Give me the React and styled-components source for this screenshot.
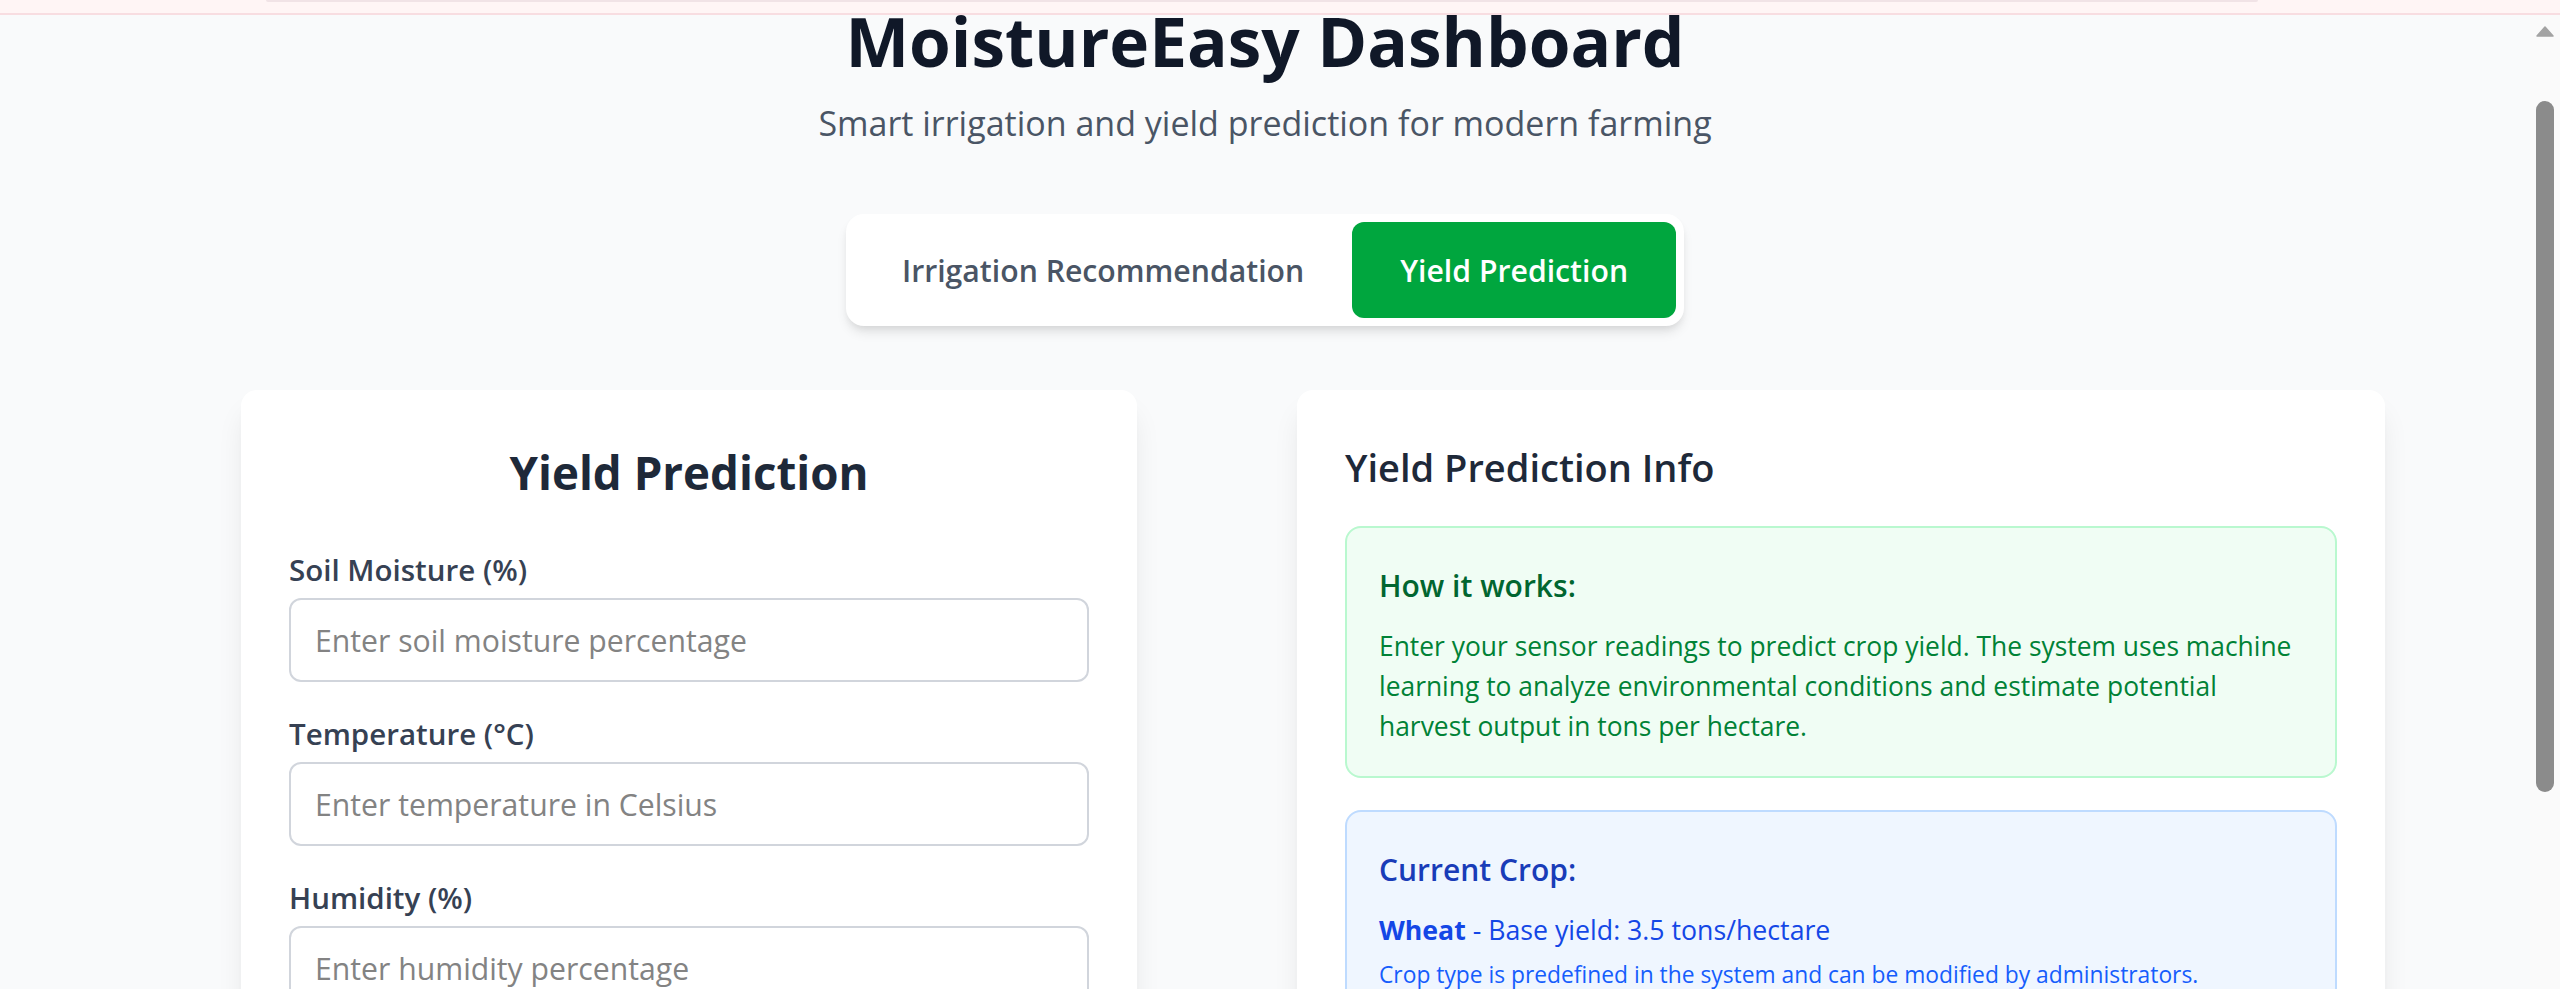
import React, { useLayoutEffect, useRef } from "react";
import styled, { createGlobalStyle } from "styled-components";

const GlobalStyle = createGlobalStyle`
  html, body { margin: 0; padding: 0; height: 100%; overflow: hidden; }
  body {
    font-family: "Open Sans", "Noto Sans", sans-serif;
    background: #f9fafb;
    color: #101828;
  }
  #root { height: 100%; }
  *, *::before, *::after { box-sizing: border-box; }
`;

const Frame = styled.div`
  height: 100vh;
  display: flex;
  flex-direction: column;
  background: #f9fafb;
`;

const Banner = styled.div`
  flex: none;
  height: 15px;
  padding-right: 36px;
  background: #fff5f5;
  border-bottom: 2px solid #f8dde1;
  display: flex;
  justify-content: center;
`;

const BannerEdge = styled.div`
  width: 1992px;
  height: 2px;
  background: #f1e3e6;
  border-radius: 0 0 3px 3px;
`;

const Body = styled.div`
  flex: 1;
  min-height: 0;
  display: flex;
`;

const Viewport = styled.div`
  flex: 1;
  min-width: 0;
  overflow: hidden;
`;

const ScrollTrack = styled.div`
  flex: none;
  width: 30px;
  background: #fafafa;
  display: flex;
  flex-direction: column;
  align-items: center;
`;

const ScrollArrow = styled.svg`
  margin-top: 10px;
  width: 18px;
  height: 13px;
  display: block;
`;

const ScrollThumb = styled.div`
  margin-top: 63px;
  width: 18px;
  height: 691px;
  border-radius: 9px;
  background: #8b8b8b;
`;

const Page = styled.main`
  padding: 64px 0 96px;
`;

const Container = styled.div`
  max-width: 2304px;
  margin: 0 auto;
  padding: 0 32px;
`;

const Header = styled.header`
  text-align: center;
  margin-bottom: 63px;
`;

const Title = styled.h1`
  margin: 0 0 14px;
  padding-top: 3px;
  font-size: 67.5px;
  line-height: 80px;
  font-weight: 700;
  color: #101828;
`;

const Subtitle = styled.p`
  margin: 0;
  font-size: 34px;
  line-height: 56px;
  color: #4a5565;
`;

const TabsRow = styled.div`
  display: flex;
  justify-content: center;
  margin-bottom: 64px;
`;

const TabBar = styled.div`
  display: flex;
  padding: 8px;
  background: #ffffff;
  border-radius: 18px;
  box-shadow: 0 8px 12px -2px rgba(0, 0, 0, 0.1), 0 4px 8px -4px rgba(0, 0, 0, 0.1);
`;

const Tab = styled.button`
  height: 96px;
  padding: 0 48px;
  border: none;
  border-radius: 12px;
  font-family: inherit;
  font-size: 30.2px;
  font-weight: 600;
  cursor: pointer;
  background: ${(p) => (p.$active ? "#00a63e" : "transparent")};
  color: ${(p) => (p.$active ? "#ffffff" : "#4a5565")};
`;

const Grid = styled.div`
  display: grid;
  grid-template-columns: repeat(2, minmax(0, 1fr));
  gap: 64px;
  align-items: start;
`;

const Card = styled.section`
  background: #ffffff;
  border-radius: 16px;
  padding: 48px;
  box-shadow: 0 20px 30px -6px rgba(0, 0, 0, 0.1), 0 8px 12px -8px rgba(0, 0, 0, 0.1);
  width: 100%;
  max-width: ${(p) => (p.$narrow ? "896px" : "none")};
  margin: 0 auto;
`;

const CardTitle = styled.h2`
  margin: 0 0 46px;
  padding-top: 2px;
  text-align: center;
  font-size: 45.7px;
  line-height: 64px;
  font-weight: 700;
  color: #1e2939;
`;

const Form = styled.form`
  display: flex;
  flex-direction: column;
  gap: 32px;
`;

const Field = styled.div`
  display: flex;
  flex-direction: column;
`;

const Label = styled.label`
  margin-bottom: 8px;
  font-size: 29.5px;
  line-height: 40px;
  font-weight: 600;
  color: #364153;
`;

const Input = styled.input`
  width: 100%;
  height: 84px;
  padding: 0 24px;
  border: 2px solid #d1d5dc;
  border-radius: 12px;
  background: #ffffff;
  font-family: inherit;
  font-size: 30.2px;
  color: #101828;
  outline: none;
  &::placeholder { color: #838383; opacity: 1; }
`;

const Submit = styled.button`
  height: 96px;
  border: none;
  border-radius: 12px;
  background: #00a63e;
  color: #ffffff;
  font-family: inherit;
  font-size: 30px;
  font-weight: 600;
`;

const InfoTitle = styled.h2`
  margin: 0 0 31px;
  padding-top: 1px;
  font-size: 38px;
  line-height: 56px;
  font-weight: 600;
  color: #1e2939;
`;

const tones = {
  green: { bg: "#f0fdf4", border: "#b9f8cf", head: "#016630", text: "#008236" },
  blue: { bg: "#eff6ff", border: "#bedbff", head: "#193cb8", text: "#1447e6", note: "#155dfc" },
};

const Notice = styled.div`
  padding: 34px 32px 30px;
  border-radius: 16px;
  border: 2px solid ${(p) => tones[p.$tone].border};
  background: ${(p) => tones[p.$tone].bg};
  & + & { margin-top: 32px; }
`;

const NoticeTitle = styled.h3`
  margin: 0 0 16px;
  font-size: 30px;
  line-height: 48px;
  font-weight: 600;
  color: ${(p) => tones[p.$tone].head};
`;

const NoticeText = styled.p`
  margin: 0;
  font-size: ${(p) => (p.$tone === "blue" ? "26.7px" : "26.4px")};
  line-height: 40px;
  color: ${(p) => tones[p.$tone].text};
`;

const Strong = styled.strong`
  font-weight: 700;
`;

const NoticeNote = styled.p`
  margin: 9px 0 0;
  font-size: 22.8px;
  line-height: 32px;
  color: ${(p) => tones[p.$tone].note};
`;

export default function App() {
  const viewRef = useRef(null);
  useLayoutEffect(() => {
    if (viewRef.current) viewRef.current.scrollTop = 81;
  }, []);

  return (
    <>
      <GlobalStyle />
      <Frame>
        <Banner>
          <BannerEdge />
        </Banner>
        <Body>
          <Viewport ref={viewRef}>
            <Page>
              <Container>
                <Header>
                  <Title>MoistureEasy Dashboard</Title>
                  <Subtitle>Smart irrigation and yield prediction for modern farming</Subtitle>
                </Header>
                <TabsRow>
                  <TabBar>
                    <Tab type="button">Irrigation Recommendation</Tab>
                    <Tab type="button" $active>Yield Prediction</Tab>
                  </TabBar>
                </TabsRow>
                <Grid>
                  <Card $narrow>
                    <CardTitle>Yield Prediction</CardTitle>
                    <Form onSubmit={(e) => e.preventDefault()}>
                      <Field>
                        <Label htmlFor="soil">Soil Moisture (%)</Label>
                        <Input id="soil" type="number" placeholder="Enter soil moisture percentage" />
                      </Field>
                      <Field>
                        <Label htmlFor="temp">Temperature (°C)</Label>
                        <Input id="temp" type="number" placeholder="Enter temperature in Celsius" />
                      </Field>
                      <Field>
                        <Label htmlFor="hum">Humidity (%)</Label>
                        <Input id="hum" type="number" placeholder="Enter humidity percentage" />
                      </Field>
                      <Submit type="submit">Predict Yield</Submit>
                    </Form>
                  </Card>
                  <Card>
                    <InfoTitle>Yield Prediction Info</InfoTitle>
                    <Notice $tone="green">
                      <NoticeTitle $tone="green">How it works:</NoticeTitle>
                      <NoticeText $tone="green">
                        Enter your sensor readings to predict crop yield. The system uses machine
                        learning to analyze environmental conditions and estimate potential harvest
                        output in tons per hectare.
                      </NoticeText>
                    </Notice>
                    <Notice $tone="blue">
                      <NoticeTitle $tone="blue">Current Crop:</NoticeTitle>
                      <NoticeText $tone="blue">
                        <Strong>Wheat</Strong> - Base yield: 3.5 tons/hectare
                      </NoticeText>
                      <NoticeNote $tone="blue">
                        Crop type is predefined in the system and can be modified by administrators.
                      </NoticeNote>
                    </Notice>
                  </Card>
                </Grid>
              </Container>
            </Page>
          </Viewport>
          <ScrollTrack>
            <ScrollArrow viewBox="0 0 18 13">
              <path d="M9 2 L17 11 L1 11 Z" fill="#a3a3a3" strokeLinejoin="round" stroke="#a3a3a3" strokeWidth="1.5" />
            </ScrollArrow>
            <ScrollThumb />
          </ScrollTrack>
        </Body>
      </Frame>
    </>
  );
}
